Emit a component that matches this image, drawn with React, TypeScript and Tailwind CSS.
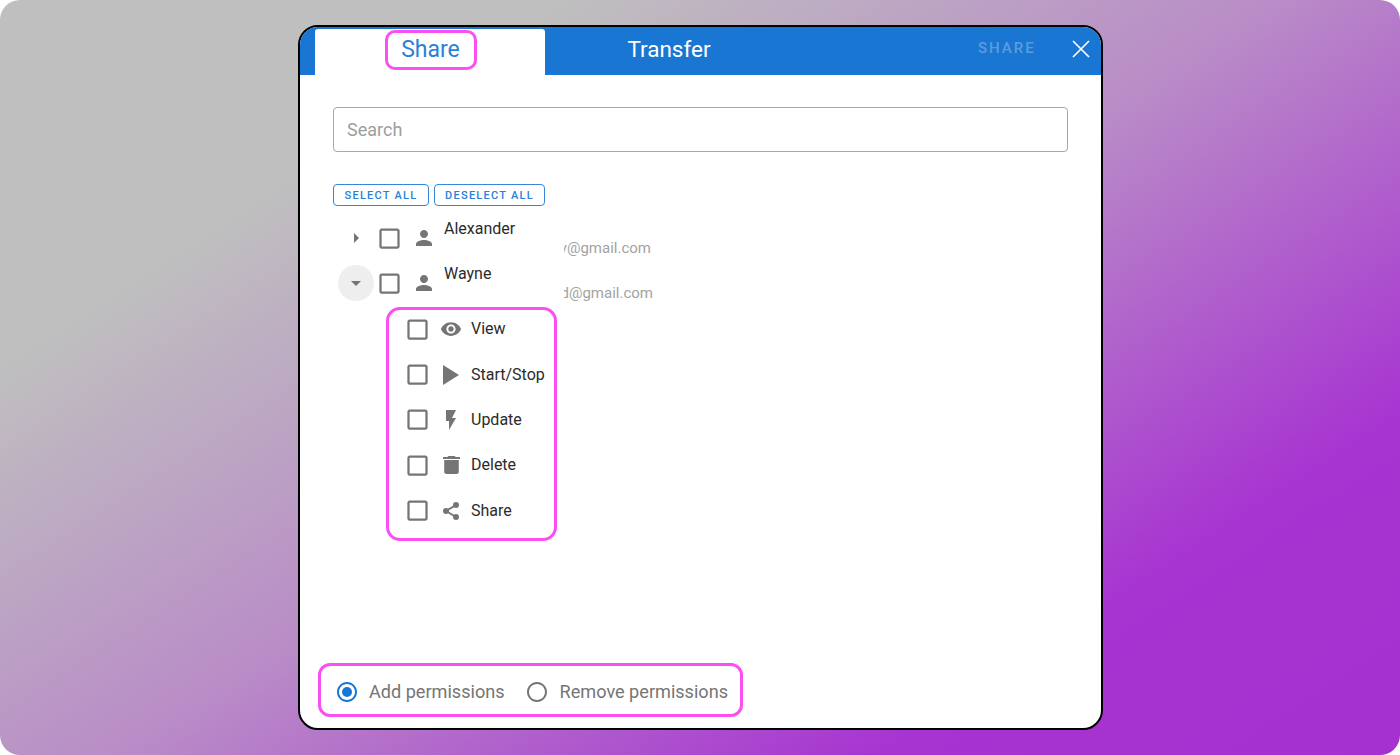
const P = {
  person: "M12 12c2.21 0 4-1.79 4-4s-1.79-4-4-4-4 1.79-4 4 1.79 4 4 4zm0 2c-2.67 0-8 1.34-8 4v2h16v-2c0-2.66-5.33-4-8-4z",
  eye: "M12 4.5C7 4.5 2.73 7.61 1 12c1.73 4.39 6 7.5 11 7.5s9.27-3.11 11-7.5c-1.73-4.39-6-7.5-11-7.5zM12 17c-2.76 0-5-2.24-5-5s2.24-5 5-5 5 2.24 5 5-2.24 5-5 5zm0-8c-1.66 0-3 1.34-3 3s1.34 3 3 3 3-1.34 3-3-1.34-3-3-3z",
  play: "M8 5v14l11-7z",
  bolt: "M7 2v11h3v9l7-12h-4l4-8z",
  trash: "M6 19c0 1.1.9 2 2 2h8c1.1 0 2-.9 2-2V7H6v12zM19 4h-3.5l-1-1h-5l-1 1H5v2h14V4z",
  box: "M19 5v14H5V5h14m0-2H5c-1.1 0-2 .9-2 2v14c0 1.1.9 2 2 2h14c1.1 0 2-.9 2-2V5c0-1.1-.9-2-2-2z",
  radio: "M12 2C6.48 2 2 6.48 2 12s4.48 10 10 10 10-4.48 10-10S17.52 2 12 2zm0 18c-4.42 0-8-3.58-8-8s3.58-8 8-8 8 3.58 8 8-3.58 8-8 8z",
  right: "M10 17l5-5-5-5v10z",
  down: "M7 10l5 5 5-5z",
};

function Icon({ d, className, box = "0 0 24 24", ratio }: { d: string; className: string; box?: string; ratio?: string }) {
  return (
    <svg viewBox={box} preserveAspectRatio={ratio} className={className} fill="currentColor">
      <path d={d} />
    </svg>
  );
}

const ShareIcon = (
  <svg viewBox="0 0 16 18" className="h-[18px] w-[16px]" fill="currentColor">
    <path d="M3 9 L13 3 M3 9 L13 15" stroke="currentColor" strokeWidth="2" fill="none" />
    <circle cx="3" cy="9" r="3" />
    <circle cx="13" cy="3" r="3" />
    <circle cx="13" cy="15" r="3" />
  </svg>
);

const perms = [
  { label: "View", icon: <Icon d={P.eye} className="h-[22px] w-[22px]" /> },
  { label: "Start/Stop", icon: <Icon d={P.play} box="8 5 11 14" ratio="none" className="h-[20px] w-[16px]" /> },
  { label: "Update", icon: <Icon d={P.bolt} className="h-[24px] w-[24px]" /> },
  { label: "Delete", icon: <Icon d={P.trash} box="5 3 14 18" ratio="none" className="h-[18px] w-[17px]" /> },
  { label: "Share", icon: ShareIcon },
];

function UserRow({ name, clip, open }: { name: string; clip: string; open?: boolean }) {
  return (
    <div className="flex h-[45.33px] items-center">
      <div className={`ml-[5px] flex h-[36px] w-[36px] items-center justify-center rounded-full text-[#757575] ${open ? "bg-[#eeeeee]" : ""}`}>
        <Icon d={open ? P.down : P.right} className="h-[24px] w-[24px]" />
      </div>
      <Icon d={P.box} className="mt-[1px] ml-[2px] h-[27px] w-[27px] text-[#757575]" />
      <Icon d={P.person} className="ml-[9px] h-[24px] w-[24px] text-[#757575]" />
      <div className="ml-[8px] h-full">
        <div className="pt-[2px] text-[16px] leading-[24px] text-[#2b2b2b]">{name}</div>
        <div className={`mt-[-3px] ml-[120px] flex justify-end overflow-hidden text-[15px] leading-[20px] whitespace-nowrap text-[#a3a3a3] ${open ? "w-[89px]" : "w-[87px]"}`}>
          {clip}@gmail.com
        </div>
      </div>
    </div>
  );
}

export default function App() {
  return (
    <div className="h-[755px] w-[1400px] bg-white [font-family:Roboto,sans-serif]">
      <div className="h-full w-full rounded-[20px] bg-[linear-gradient(147deg,#bfbfbf_0%,#bfbfbf_22%,#b98cc7_50%,#a733d1_80%,#a531d0_100%)] pt-[25px] pl-[298px]">
        <div className="flex h-[705px] w-[805px] flex-col overflow-hidden rounded-[20px] border-2 border-black bg-white">
          <div className="flex h-[48px] shrink-0 items-end bg-[#1976d2] pl-[15px]">
            <div className="flex h-[46px] w-[230px] items-start justify-center rounded-t-[3px] bg-white">
              <div className="mt-[1px] ml-[2px] flex h-[40px] w-[92px] items-center justify-center rounded-[10px] border-[3px] border-[#fb4ff4] pt-[1px] pr-[1px] text-[23px] text-[#2a7fd8]">
                Share
              </div>
            </div>
            <div className="flex h-[46px] w-[248px] items-center justify-center pb-[4px] text-[22.5px] text-white">Transfer</div>
            <div className="ml-[185px] flex h-[46px] items-center pb-[7px] text-[15px] font-medium tracking-[2px] text-white/30">SHARE</div>
            <div className="ml-[36px] flex h-[48px] items-center pb-[4px] text-white">
              <svg viewBox="0 0 18 18" className="h-[18px] w-[18px]" stroke="currentColor" strokeWidth="1.7" fill="none">
                <path d="M1 1 L17 17 M17 1 L1 17" />
              </svg>
            </div>
          </div>

          <div className="flex min-h-0 flex-1 flex-col pl-[33px]">
            <div className="mt-[32px] flex h-[45px] w-[735px] items-center rounded-[4px] border border-[#a8a8a8] px-[13px] text-[18px] text-[#9e9e9e]">
              Search
            </div>
            <div className="mt-[32px] flex gap-[5px]">
              <div className="flex h-[22px] w-[96px] items-center justify-center rounded-[4px] border border-[#3585d8] pt-[2px] text-[11px] font-medium tracking-[1.25px] text-[#2a7fd8]">SELECT ALL</div>
              <div className="flex h-[22px] w-[111px] items-center justify-center rounded-[4px] border border-[#3585d8] pt-[2px] text-[11px] font-medium tracking-[1.25px] text-[#2a7fd8]">DESELECT ALL</div>
            </div>
            <div className="mt-[9px]">
              <UserRow name="Alexander" clip="y" />
              <UserRow name="Wayne" clip="d" open />
            </div>
            <div className="mt-[1px] ml-[53px] w-[171px] rounded-[14px] border-[3px] border-[#fb4ff4] pb-[5px]">
              <div className="mt-[-3px]">
                {perms.map((p) => (
                  <div key={p.label} className="flex h-[45.33px] items-center">
                    <Icon d={P.box} className="ml-[15px] h-[27px] w-[27px] text-[#757575]" />
                    <div className="ml-[8px] flex w-[24px] items-center justify-center text-[#757575]">{p.icon}</div>
                    <div className="ml-[8px] text-[16px] whitespace-nowrap text-[#2b2b2b]">{p.label}</div>
                  </div>
                ))}
              </div>
            </div>
            <div className="mt-auto mb-[11px] ml-[-15px] flex h-[54px] w-[425px] items-center rounded-[12px] border-[3px] border-[#fb4ff4] pt-[3px] text-[18.1px] text-[#757575]">
              <svg viewBox="0 0 24 24" className="ml-[14px] h-[24px] w-[24px] text-[#1976d2]" fill="currentColor">
                <path d={P.radio} />
                <circle cx="12" cy="12" r="5" />
              </svg>
              <span className="ml-[10px]">Add permissions</span>
              <Icon d={P.radio} className="ml-[20px] h-[24px] w-[24px]" />
              <span className="ml-[11px]">Remove permissions</span>
            </div>
          </div>
        </div>
      </div>
    </div>
  );
}
